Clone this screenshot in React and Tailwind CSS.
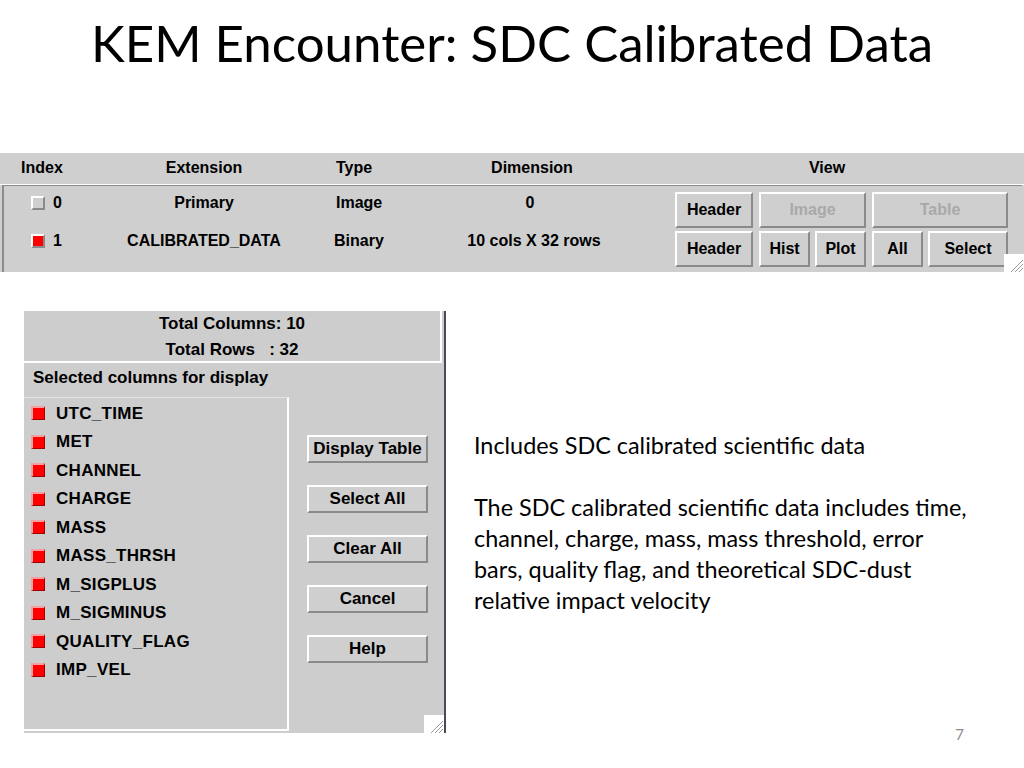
import React from "react";

const gui = { fontFamily: '"Liberation Sans", Arial, Helvetica, sans-serif' };
const slide = { fontFamily: 'Lato, "Open Sans", sans-serif' };

function Btn({ children, disabled, className = "" }) {
  return (
    <div
      className={`flex items-center justify-center bg-[#cfcfcf] border-2 border-t-white border-l-white border-b-[#8a8a8a] border-r-[#8a8a8a] font-bold ${
        disabled ? "text-[#a9a9a9]" : "text-black"
      } ${className}`}
    >
      {children}
    </div>
  );
}

function Grip() {
  return (
    <svg width="20" height="18" viewBox="0 0 20 18" className="absolute right-0 bottom-0">
      <rect x="0" y="0" width="20" height="18" fill="#ffffff" />
      <path d="M19 6 L7 18" stroke="#9a9a9a" strokeWidth="1" />
      <path d="M19 10 L11 18" stroke="#9a9a9a" strokeWidth="1" />
      <path d="M19 14 L15 18" stroke="#9a9a9a" strokeWidth="1" />
    </svg>
  );
}

function Check({ on }) {
  return (
    <div
      className={`w-[14px] h-[14px] border-2 border-t-white border-l-white border-b-[#8a8a8a] border-r-[#8a8a8a] ${
        on ? "bg-[#ff0000]" : "bg-[#cfcfcf]"
      }`}
    />
  );
}

const cols = [
  "UTC_TIME",
  "MET",
  "CHANNEL",
  "CHARGE",
  "MASS",
  "MASS_THRSH",
  "M_SIGPLUS",
  "M_SIGMINUS",
  "QUALITY_FLAG",
  "IMP_VEL",
];

export default function App() {
  return (
    <div className="w-[1024px] h-[768px] bg-white overflow-hidden flex flex-col">
      <h1
        style={slide}
        className="h-[153px] pt-[12px] text-center text-[51px] leading-[62px] text-black font-normal"
      >
        KEM Encounter: SDC Calibrated Data
      </h1>

      {/* top FITS panel */}
      <div style={gui} className="relative w-[1024px] h-[119px] bg-[#cfcfcf] flex flex-col text-[16px] font-bold text-black">
        <div className="h-[32px] pb-[1px] flex items-center border-b border-white">
          <div className="w-[84px] text-center">Index</div>
          <div className="w-[240px] text-center">Extension</div>
          <div className="w-[110px] pl-[12px]">Type</div>
          <div className="w-[196px] text-center">Dimension</div>
          <div className="flex-1 text-center">View</div>
        </div>
        <div className="flex-1 ml-[2px] mr-[2px] flex border-l-2 border-t border-[#8c8c8c]">
          <div className="w-[630px] flex flex-col gap-[8px] pt-[2px]">
            <div className="h-[30px] flex items-center">
              <div className="w-[80px] pl-[27px] flex items-center gap-[8px]">
                <Check on={false} />
                <span>0</span>
              </div>
              <div className="w-[240px] text-center">Primary</div>
              <div className="w-[110px] pl-[12px]">Image</div>
              <div className="w-[196px] text-center pr-[4px]">0</div>
            </div>
            <div className="h-[30px] flex items-center">
              <div className="w-[80px] pl-[27px] flex items-center gap-[8px]">
                <Check on={true} />
                <span>1</span>
              </div>
              <div className="w-[240px] text-center">CALIBRATED_DATA</div>
              <div className="w-[110px] pl-[10px]">Binary</div>
              <div className="w-[196px] text-center pl-[4px]">10 cols X 32 rows</div>
            </div>
          </div>
          <div className="flex-1 pl-[41px] pt-[6px] flex flex-col gap-[3px]">
            <div className="flex gap-[6px] h-[36px]">
              <Btn className="w-[78px]">Header</Btn>
              <Btn disabled className="w-[107px]">Image</Btn>
              <Btn disabled className="w-[136px]">Table</Btn>
            </div>
            <div className="flex gap-[5px] h-[36px]">
              <Btn className="w-[78px] mr-[1px]">Header</Btn>
              <Btn className="w-[51px]">Hist</Btn>
              <Btn className="w-[51px] mr-[1px]">Plot</Btn>
              <Btn className="w-[51px]">All</Btn>
              <Btn className="w-[80px]">Select</Btn>
            </div>
          </div>
        </div>
        <Grip />
      </div>

      {/* lower row */}
      <div className="mt-[39px] flex">
        <div
          style={gui}
          className="relative ml-[24px] w-[422px] h-[422px] bg-[#cdcdcd] border-r-2 border-[#4a4a55] flex flex-col text-[17px] font-bold text-black"
        >
          <div className="mr-[2px] h-[52px] border-r-2 border-b-2 border-white flex flex-col items-center leading-[26px]">
            <div>Total Columns: 10</div>
            <div className="whitespace-pre">Total Rows   : 32</div>
          </div>
          <div className="h-[34px] pb-[4px] pl-[9px] flex items-center">Selected columns for display</div>
          <div className="flex-1 flex">
            <div className="w-[265px] h-[334px] border-t border-[#e4e4e4] border-r-2 border-b-2 border-r-white border-b-white pt-[1px] flex flex-col">
              {cols.map((c) => (
                <div key={c} className="h-[28.5px] flex items-center pl-[7px] gap-[11px] tracking-[0.3px]">
                  <div className="w-[14px] h-[14px] bg-[#ff0000] border-l-2 border-t-2 border-l-[#f0a0a0] border-t-[#f0a0a0] border-r border-b border-r-[#a00000] border-b-[#a00000]" />
                  <span>{c}</span>
                </div>
              ))}
            </div>
            <div className="ml-[18px] mt-[38px] w-[121px] flex flex-col gap-[22px]">
              <Btn className="h-[28px]">Display Table</Btn>
              <Btn className="h-[28px]">Select All</Btn>
              <Btn className="h-[28px]">Clear All</Btn>
              <Btn className="h-[28px]">Cancel</Btn>
              <Btn className="h-[28px]">Help</Btn>
            </div>
          </div>
          <Grip />
        </div>

        <div style={slide} className="flex-1 ml-[28px] flex flex-col">
          <div className="flex-1 flex flex-col justify-center text-[23.4px] leading-[31px] text-black pt-[2px]">
            <p>Includes SDC calibrated scientific data</p>
            <p className="mt-[31px]">
              The SDC calibrated scientific data includes time,
              <br />
              channel, charge, mass, mass threshold, error
              <br />
              bars, quality flag, and theoretical SDC-dust
              <br />
              relative impact velocity
            </p>
          </div>
          <div className="h-0 flex justify-end pr-[60px]">
            <span className="-mt-[10px] text-[15px] text-[#8b8b8b]">7</span>
          </div>
        </div>
      </div>
    </div>
  );
}
